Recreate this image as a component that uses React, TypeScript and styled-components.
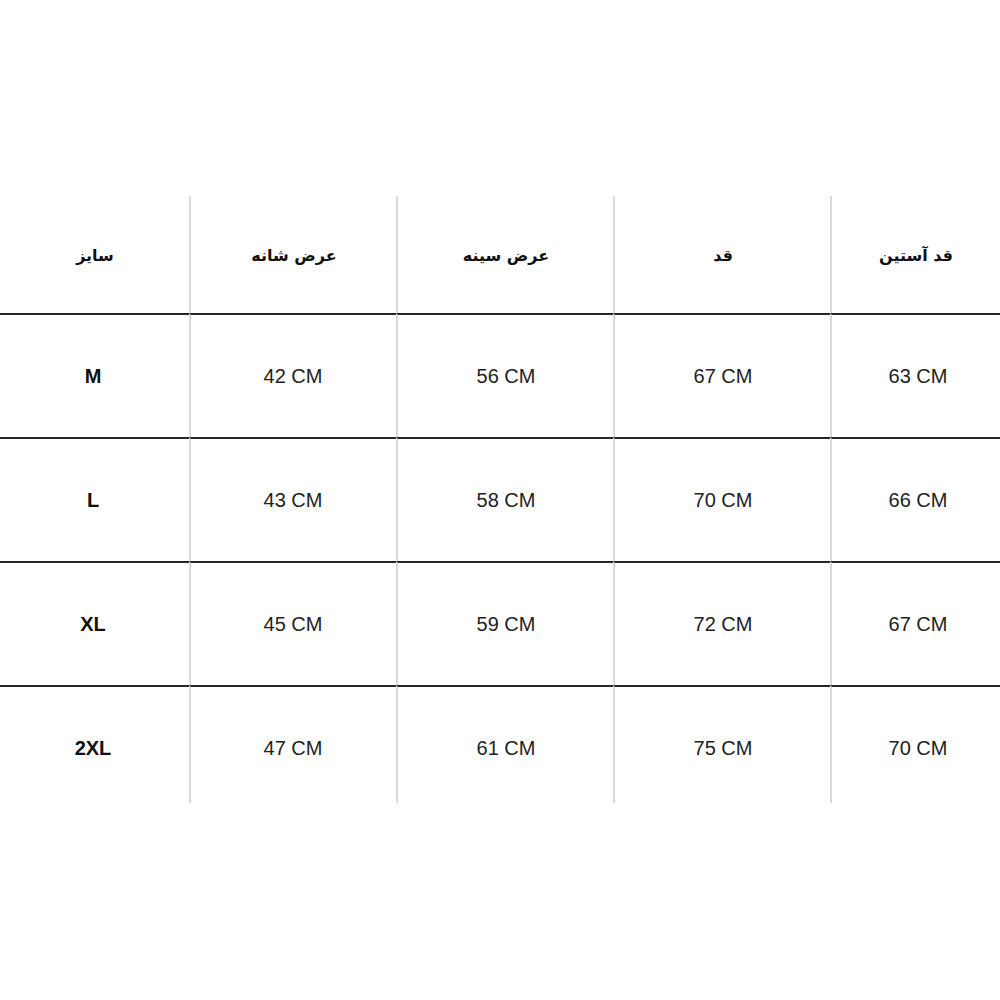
import React from "react";
import styled, { createGlobalStyle } from "styled-components";

const Global = createGlobalStyle`
  html, body { margin: 0; padding: 0; background: #ffffff; }
  body { font-family: "Liberation Sans", Arial, "DejaVu Sans", sans-serif; }
`;

const Page = styled.div`
  width: 1000px;
  height: 1000px;
  padding-top: 196px;
  box-sizing: border-box;
  background: #ffffff;
`;

const Table = styled.div`
  display: grid;
  grid-template-columns: 190px 207px 217px 217px 169px;
  width: 1000px;
`;

const Cell = styled.div<{ $first?: boolean; $header?: boolean; $last?: boolean }>`
  box-sizing: border-box;
  height: ${(p) => (p.$header ? "117px" : p.$last ? "118px" : "124px")};
  border-top: ${(p) => (p.$header ? "none" : "2px solid #262626")};
  border-left: ${(p) => (p.$first ? "none" : "2px solid #dadada")};
  display: flex;
  align-items: center;
  justify-content: center;
  padding-top: ${(p) => (p.$last ? "6px" : "0")};
  margin-left: ${(p) => (p.$first ? "0" : "-1px")};
`;

const HeadText = styled.span`
  font-family: "DejaVu Sans", "Liberation Sans", sans-serif;
  font-weight: bold;
  font-size: 16px;
  color: #111111;
  direction: rtl;
  margin-top: 2px;
`;

const SizeText = styled.span`
  font-family: "Liberation Sans", Arial, sans-serif;
  font-weight: bold;
  font-size: 20px;
  color: #111111;
  margin-left: -4px;
`;

const ValueText = styled.span<{ $shift?: number }>`
  font-family: "Liberation Sans", Arial, sans-serif;
  font-size: 20px;
  color: #222222;
  margin-left: ${(p) => p.$shift ?? 0}px;
`;

const headers = ["سایز", "عرض شانه", "عرض سینه", "قد", "قد آستین"];
const rows: [string, number[]][] = [
  ["M", [42, 56, 67, 63]],
  ["L", [43, 58, 70, 66]],
  ["XL", [45, 59, 72, 67]],
  ["2XL", [47, 61, 75, 70]],
];

export default function App() {
  return (
    <>
      <Global />
      <Page>
        <Table>
          {headers.map((h, i) => (
            <Cell key={h} $header $first={i === 0}>
              <HeadText>{h}</HeadText>
            </Cell>
          ))}
          {rows.map(([size, vals], r) => {
            const last = r === rows.length - 1;
            return (
              <React.Fragment key={size}>
                <Cell $first $last={last}>
                  <SizeText>{size}</SizeText>
                </Cell>
                {vals.map((v, i) => (
                  <Cell key={i} $last={last}>
                    <ValueText $shift={i === 3 ? 4 : i === 0 ? -2 : 0}>{v} CM</ValueText>
                  </Cell>
                ))}
              </React.Fragment>
            );
          })}
        </Table>
      </Page>
    </>
  );
}
